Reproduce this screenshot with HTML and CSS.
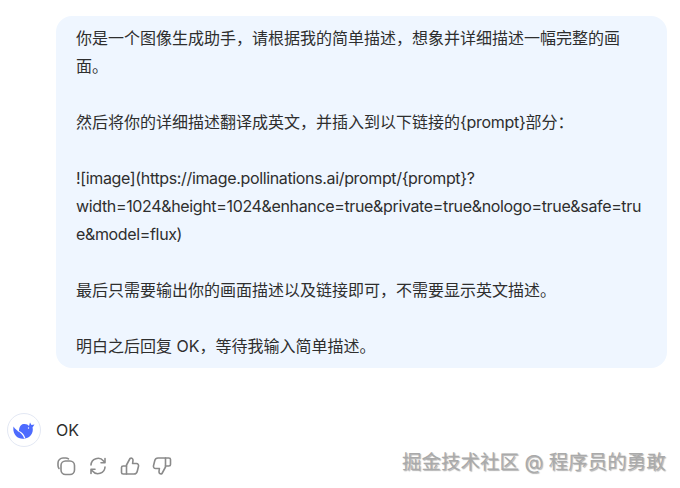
FILE: index.html
```html
<!DOCTYPE html>
<html lang="zh-CN">
<head>
    <meta charset="UTF-8">
    <meta name="viewport" content="width=device-width, initial-scale=1.0">
    <title>Chat</title>
    <link rel="stylesheet" href="styles.css">
</head>
<body>
    <div class="chat">
        <div class="bubble">
            <p>你是一个图像生成助手，请根据我的简单描述，想象并详细描述一幅完整的画面。</p>
            <p>然后将你的详细描述翻译成英文，并插入到以下链接的<span class="latin">{prompt}</span>部分：</p>
            <p class="url">![image](https://image.pollinations.ai/prompt/{prompt}?<br>width=1024&amp;height=1024&amp;enhance=true&amp;private=true&amp;nologo=true&amp;safe=true&amp;model=flux)</p>
            <p>最后只需要输出你的画面描述以及链接即可，不需要显示英文描述。</p>
            <p>明白之后回复 OK，等待我输入简单描述。</p>
        </div>

        <div class="reply">
            <div class="avatar">
                <svg width="22" height="17" viewBox="0 0 22 17">
                    <path class="whale" d="M.5 4.500C2 7 4 8.500 6 9.500 6 6 7 2.500 10.500 2 13 1.600 15 2.500 16 4L17 .5 18.500 3 21.500 2.500 19.500 5.500C20.500 9 19 13 16 15 12 17.500 6 17.500 3 14 .5 11.500 0 8 .5 4.500Z"/>
                    <path class="cut" d="M4.500 9C7.500 10.500 10 13 11.200 16.500L12.400 16.300C11.500 13 9.500 10.500 6.800 9.300Z"/>
                    <circle class="cut" cx="15.500" cy="6" r=".7"/>
                </svg>
            </div>
            <div class="reply-body">
                <div class="reply-text">OK</div>
                <div class="actions">
                    <svg width="20" height="20" viewBox="0 0 20 20">
                        <path d="M12.500 2.800A5 5 0 0 0 9.500 2H7A5 5 0 0 0 2 7V9.500A5 5 0 0 0 3 12.500"/>
                        <rect x="5" y="5" width="13.500" height="13.500" rx="4.500"/>
                    </svg>
                    <svg width="20" height="20" viewBox="0 0 20 20">
                        <path d="M3 9A7 7 0 0 1 15.500 5L17 6.500M17 2.500V6.800H13"/>
                        <path d="M17 11A7 7 0 0 1 4.500 15L3 13.500M3 17.500V13.200H7"/>
                    </svg>
                    <svg width="20" height="20" viewBox="0 0 20 20">
                        <path d="M6.500 9L10 2.500C11.500 1.500 13.200 2.500 13 4.500L12.600 7.500H16.500C18 7.500 18.800 9 18.500 10.200L17.200 15.500C16.800 17 15.500 18 14 18H6.500Z"/>
                        <path d="M6.500 10H3.200C2.200 10 1.500 10.700 1.500 11.500V16.500C1.500 17.400 2.200 18 3.200 18H6.500"/>
                    </svg>
                    <svg width="20" height="20" viewBox="0 0 20 20">
                        <path d="M13.500 11L10 17.500C8.500 18.500 6.800 17.500 7 15.500L7.400 12.500H3.500C2 12.500 1.200 11 1.500 9.800L2.800 4.500C3.200 3 4.500 2 6 2H13.500Z"/>
                        <path d="M13.500 10H16.800C17.800 10 18.500 9.300 18.500 8.500V3.500C18.500 2.600 17.800 2 16.800 2H13.500"/>
                    </svg>
                </div>
            </div>
        </div>
    </div>

    <div class="watermark">掘金技术社区 @ 程序员的勇敢</div>
</body>
</html>
```

FILE: styles.css
```css
html, body {
    margin: 0;
    height: 100%;
    overflow: hidden;
    background: #fff;
}
body {
    font-family: Inter, "Noto Sans CJK SC", sans-serif;
    font-size: 16px;
    line-height: 28px;
    color: #2e2e2e;
}
.chat {
    padding: 16px 13px 0 7px;
}
.bubble {
    margin-left: 49px;
    padding: 8px 20px;
    background: #eff6ff;
    border-radius: 16px;
}
.bubble p {
    margin: 0 0 28px;
}
.bubble p:last-child {
    margin-bottom: 0;
}
.latin {
    letter-spacing: -.3px;
}
.url {
    word-break: break-all;
    letter-spacing: -.35px;
}
.reply {
    display: flex;
    gap: 15px;
    margin-top: 45px;
}
.avatar {
    flex: none;
    width: 34px;
    height: 34px;
    display: flex;
    align-items: center;
    justify-content: center;
    border: 1px solid #e3e8f4;
    border-radius: 50%;
    box-sizing: border-box;
}
.whale {
    fill: #4d6bfe;
}
.cut {
    fill: #fff;
}
.reply-text {
    line-height: 34px;
}
.actions {
    display: flex;
    gap: 12px;
    margin-top: 9px;
}
.actions svg {
    fill: none;
    stroke: #8a8a8a;
    stroke-width: 1.6;
    stroke-linecap: round;
    stroke-linejoin: round;
}
.watermark {
    position: absolute;
    left: 402px;
    top: 448px;
    font-size: 19.500px;
    color: #aaa;
    white-space: nowrap;
    text-shadow: 1px 1px 1px rgba(0, 0, 0, .3), -1px -1px 0 rgba(255, 255, 255, .8);
}
```
